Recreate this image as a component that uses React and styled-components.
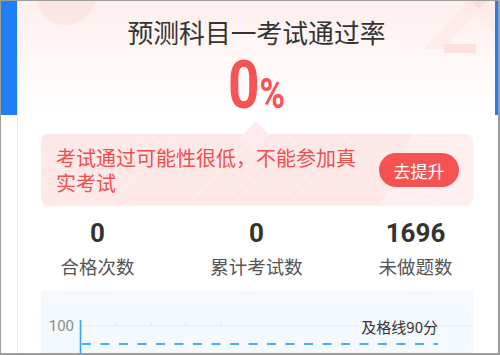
import styled, { createGlobalStyle } from "styled-components";

const GlobalStyle = createGlobalStyle`
  html, body {
    margin: 0;
    padding: 0;
    background: #fff;
  }
  * {
    box-sizing: border-box;
  }
`;

const CJK = `"Noto Sans CJK SC", "Noto Sans", sans-serif`;
const NUM = `Roboto, "Noto Sans", sans-serif`;

const Frame = styled.div`
  width: 500px;
  height: 355px;
  border-style: solid;
  border-color: #9d9d9d;
  border-width: 1px 2px 2px 1px;
  overflow: hidden;
  display: flex;
  padding: 0 4px 0 16px;
  background: linear-gradient(180deg, #1e7ff6 0, #1e7ff6 114px, #fff 114px);
`;

const Card = styled.section`
  position: relative;
  flex: 1;
  display: flex;
  flex-direction: column;
  padding-top: 15px;
  border-left: 1px solid #ececec;
  background: linear-gradient(180deg, #fdefed 0%, #fff8f7 60px, #fff 110px);
  font-family: ${CJK};
`;

const Decor = styled.svg`
  position: absolute;
  top: 0;
  left: 0;
  pointer-events: none;
`;

const Title = styled.h1`
  position: relative;
  margin: 0;
  font-size: 25.8px;
  line-height: 32px;
  font-weight: 400;
  color: #333;
  text-align: center;
`;

const Rate = styled.div`
  position: relative;
  margin-top: 4px;
  display: flex;
  justify-content: center;
  align-items: baseline;
  color: #f65353;
  font-family: ${NUM};
  font-weight: 700;
  line-height: 1;
  transform: scaleX(0.82);
`;

const RateValue = styled.span`
  font-size: 67px;
  line-height: 67px;
`;

const RateUnit = styled.span`
  font-size: 42px;
`;

const Bubble = styled.div`
  position: relative;
  margin: 15px 22px 0 23px;
  padding: 11px 14px 11px 15px;
  display: flex;
  align-items: center;
  border-radius: 7px;
  background:
    linear-gradient(115deg, transparent 0 80%, rgba(255, 255, 255, 0.3) 80% 100%),
    repeating-linear-gradient(135deg, rgba(255, 255, 255, 0.14) 0 3px, transparent 3px 8px),
    #fde8e7;

  &::before {
    content: "";
    position: absolute;
    top: -9px;
    left: 205px;
    width: 20px;
    height: 20px;
    border-radius: 3px;
    background: #fdeceb;
    transform: rotate(45deg);
  }
`;

const BubbleText = styled.p`
  position: relative;
  margin: 0;
  width: 306px;
  font-size: 20px;
  line-height: 25px;
  color: #f04f4f;
`;

const BoostButton = styled.button`
  position: relative;
  margin-left: auto;
  width: 80px;
  height: 34px;
  border: none;
  border-radius: 17px;
  background: #f55252;
  color: #fff;
  font-family: ${CJK};
  font-size: 17px;
  cursor: pointer;
`;

const Stats = styled.div`
  margin-top: 12px;
  display: grid;
  grid-template-columns: repeat(3, 1fr);
`;

const Stat = styled.div`
  display: flex;
  flex-direction: column;
  align-items: center;
`;

const StatNumber = styled.span`
  font-family: ${NUM};
  font-weight: 700;
  font-size: 26px;
  line-height: 30px;
  color: #333;
`;

const StatLabel = styled.span`
  margin-top: 6px;
  font-size: 18.5px;
  line-height: 24px;
  color: #555;
`;

const Chart = styled.div`
  margin: 13px 22px 0 23px;
  height: 90px;
  background: #f4f9fe;
`;

const stats = [
  { value: "0", label: "合格次数" },
  { value: "0", label: "累计考试数" },
  { value: "1696", label: "未做题数" },
];

export default function App() {
  return (
    <>
      <GlobalStyle />
      <Frame>
        <Card>
          <Decor width="477" height="90" viewBox="0 0 477 90">
            <circle cx="48" cy="-6" r="30" fill="#fbd8d2" opacity="0.4" />
            <polygon points="405,48 450,0 470,0 425,48" fill="#fde6e2" opacity="0.5" />
            <polygon points="445,0 477,0 477,34" fill="#fdeae7" opacity="0.6" />
            <polygon points="452,0 470,0 461,7" fill="#f9d3cc" opacity="0.6" />
            <rect x="426" y="43" width="32" height="9" fill="#fcdbd5" opacity="0.75" />
          </Decor>

          <Title>预测科目一考试通过率</Title>
          <Rate>
            <RateValue>0</RateValue>
            <RateUnit>%</RateUnit>
          </Rate>

          <Bubble>
            <BubbleText>考试通过可能性很低，不能参加真实考试</BubbleText>
            <BoostButton>去提升</BoostButton>
          </Bubble>

          <Stats>
            {stats.map((s) => (
              <Stat key={s.label}>
                <StatNumber>{s.value}</StatNumber>
                <StatLabel>{s.label}</StatLabel>
              </Stat>
            ))}
          </Stats>

          <Chart>
            <svg width="432" height="90" viewBox="0 0 432 90">
              <line x1="40" y1="35" x2="432" y2="35" stroke="#e8edf2" strokeWidth="1" />
              {[75, 110, 145, 180].map((x) => (
                <line key={x} x1={x} y1="31" x2={x} y2="35" stroke="#e3e8ee" strokeWidth="1" />
              ))}
              <text
                x="33"
                y="35"
                textAnchor="end"
                dominantBaseline="central"
                fontFamily="Roboto, sans-serif"
                fontSize="15"
                fill="#8a8a8a"
              >
                100
              </text>
              <text
                x="397"
                y="35"
                textAnchor="end"
                dominantBaseline="central"
                fontFamily='"Noto Sans CJK SC", sans-serif'
                fontSize="15"
                fill="#333"
              >
                及格线90分
              </text>
              <line x1="39.5" y1="29" x2="39.5" y2="90" stroke="#3aa2f2" strokeWidth="1.6" />
              <line
                x1="41"
                y1="53"
                x2="397"
                y2="53"
                stroke="#45aef4"
                strokeWidth="2"
                strokeDasharray="9 9.5"
              />
            </svg>
          </Chart>
        </Card>
      </Frame>
    </>
  );
}
